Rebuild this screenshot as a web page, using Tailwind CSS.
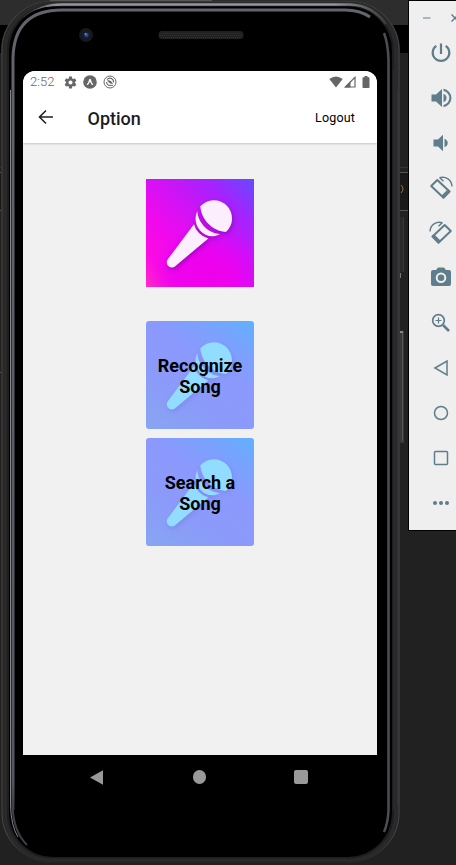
<!DOCTYPE html>
<html lang="en">
<head>
<meta charset="utf-8">
<title>Option</title>
<script src="https://cdn.jsdelivr.net/npm/@tailwindcss/browser@4"></script>
</head>
<body class="relative h-[865px] w-[456px] overflow-hidden bg-[#212121] font-[Roboto,sans-serif]">
<!-- editor behind the emulator, and the device frame -->
<svg class="absolute inset-0" width="456" height="865" viewBox="0 0 456 865" fill="none">
  <defs>
    <linearGradient id="fadeL" x1="0" y1="0" x2="0" y2="865" gradientUnits="userSpaceOnUse"><stop offset="0" stop-color="#62656e"/><stop offset=".9" stop-color="#555862"/><stop offset="1" stop-color="#111"/></linearGradient>
    <linearGradient id="topRim" x1="20" y1="0" x2="390" y2="0" gradientUnits="userSpaceOnUse"><stop offset="0" stop-color="#333"/><stop offset=".1" stop-color="#92959a"/><stop offset=".85" stop-color="#92959a"/><stop offset="1" stop-color="#333"/></linearGradient>
  </defs>
  <path d="M0 0H456V25H0Z" fill="#2d2d2d"/><path d="M50 0H212V1H50Z" fill="#555"/>
  <path d="M0 25H456V53H0Z" fill="#000"/>
  <path d="M0 167.500H409" stroke="#333"/><path d="M0 173H409V210H0Z" fill="#191919"/>
  <path d="M0 172.500H409M0 210.500H409" stroke="#555"/><path d="M0 372.500H3" stroke="#555"/>
  <path d="M401 185q4 4 0 8" stroke="#8b7840"/>
  <path d="M400 217H404V272H400Z" fill="#292929"/><path d="M403.500 218V272" stroke="#383838"/><path d="M400.500 273V278" stroke="#777"/>
  <path d="M400 331H404V443H400Z" fill="#393939"/><path d="M402.500 333V441" stroke="#555"/><path d="M400 331H403V333H400Z" fill="#888"/>
  <rect x="1" y="1" width="399" height="861" rx="50" fill="#1e1e1e"/>
  <rect x="2" y="1.500" width="397" height="860" rx="49" stroke="#454545" stroke-width="1.200"/>
  <rect x="5" y="3.500" width="391" height="857" rx="47" stroke="#292929" stroke-width="4"/>
  <path d="M24 18Q40 4.500 62 4.500H350Q372 5 386 24" stroke="url(#topRim)" stroke-width="2.500"/>
  <rect x="9" y="6.500" width="383" height="850.500" rx="44" fill="#000"/>
  <path d="M10.500 90V805Q11 826 18 837" stroke="#85878a"/>
  <path d="M13 810V58Q14 10 62 10H345Q360 10 370 17" stroke="url(#fadeL)" stroke-width="3"/>
  <path d="M12.500 805Q13 831 27 845" stroke="#3d4046" stroke-width="2"/>
  <path d="M384 33Q388 43 388.500 60V810Q388 823 384 832" stroke="#4d4e53" stroke-width="2.500"/>
  <path d="M394.500 70V810" stroke="#292929" stroke-width="3"/><path d="M398 90V805" stroke="#3b3b3b"/>
  <circle cx="86" cy="35" r="7" fill="#181819"/><circle cx="86" cy="35" r="4" fill="#141c3c"/><circle cx="86.500" cy="35" r="2" fill="#354b88"/><circle cx="85.500" cy="34" r="1" fill="#7289bc"/>
  <rect x="158.500" y="31" width="85" height="8" rx="3.500" fill="#202120"/><path d="M161 33.500H241M160 35.500H242M161 37.500H241" stroke="#303330" stroke-dasharray="1 1"/>
</svg>
<svg class="hidden">
  <symbol id="mic" viewBox="0 0 108 108">
    <path d="M54.300 27.300A18.200 18.200 0 1 1 80 53C71 53 56 45 54.300 27.300Z"/>
    <path d="M51.300 32.300C52 43 61 54 74 55C67 59 60 57.500 55 52.500C49.500 47 48 39 51.300 32.300Z"/>
    <path d="M48 45.300Q49 50 53 54Q57 58 62.300 59.500L29.800 86.700A4.400 4.400 0 0 1 22 80Z"/>
  </symbol>
</svg>

<main class="relative ml-[23px] flex w-[354px] flex-col pt-[71px]">
  <section class="h-[684px] overflow-hidden rounded-t-[12px] bg-[#f1f1f1]">
    <header class="h-[72px] bg-white shadow-[0_1px_2px_rgba(0,0,0,0.18)]">
      <div class="flex h-[22px] items-center pr-[7px] pl-[7px] text-[#666]">
        <span class="w-[34px] text-[13px] leading-[22px] font-light">2:52</span>
        <svg width="13" height="13" viewBox="1 1 22 22" fill="currentColor"><path d="M19.430 12.980c.04-.32.07-.64.07-.98s-.03-.66-.07-.98l2.110-1.650c.19-.15.24-.42.12-.64l-2-3.460c-.12-.22-.39-.3-.61-.22l-2.490 1a7.300 7.300 0 0 0-1.690-.98l-.38-2.650A.49.49 0 0 0 14 2h-4c-.25 0-.46.18-.49.42l-.38 2.650c-.61.25-1.170.59-1.690.98l-2.490-1c-.23-.09-.49 0-.61.22l-2 3.460c-.13.22-.07.49.12.64l2.110 1.650c-.04.32-.07.65-.07.98s.03.66.07.98l-2.110 1.650c-.19.15-.24.42-.12.64l2 3.460c.12.22.39.3.61.22l2.490-1c.52.4 1.080.73 1.690.98l.38 2.650c.03.24.24.42.49.42h4c.25 0 .46-.18.49-.42l.38-2.650c.61-.25 1.170-.59 1.690-.98l2.490 1c.23.09.49 0 .61-.22l2-3.460c.12-.22.07-.49-.12-.64zM12 15.500a3.500 3.500 0 1 1 0-7 3.500 3.500 0 0 1 0 7Z"/></svg>
        <svg class="ml-[6px]" width="14" height="14" viewBox="0 0 14 14"><circle cx="7" cy="7" r="6.800" fill="currentColor"/><path d="M3.700 9.700Q5.600 7.200 6.100 4.400Q7 3.300 7.900 4.400Q8.400 7.200 10.300 9.700Q9.300 10.700 8.300 8.900L7 6.700L5.700 8.900Q4.700 10.700 3.700 9.700Z" fill="#fff"/></svg>
        <svg class="ml-[6px]" width="14" height="14" viewBox="0 0 14 14" fill="none" stroke="currentColor"><circle cx="7" cy="7" r="6" stroke-width="1"/><path d="M4 4.500Q6 2.500 8.500 3.500Q11 5 10.500 7.500M3.500 7Q4 10.500 7 10.500L10 10.300" stroke-width="1.100"/><path d="M4.500 5.700Q8 5 9.500 8.500L7 8.300Z" fill="currentColor" stroke-width=".6"/></svg>
        <svg class="ml-auto" width="14" height="12" viewBox="0 0 14 12" fill="currentColor"><path d="M.3 3Q7-2 13.700 3L7 11.500Z"/></svg>
        <svg class="ml-[1px]" width="12" height="12" viewBox="0 0 12 12"><path d="M1.300 11L11 1.300V11Z" fill="none" stroke="currentColor" stroke-width="1.200"/><path d="M.5 11.500L6.500 5.500V11.500Z" fill="currentColor"/></svg>
        <svg class="ml-[6px]" width="8" height="12" viewBox="0 0 8 12" fill="currentColor"><path d="M2.500 0h3v1.300H7q.5 0 .5.700v9q0 1-.7 1H1.200Q.5 12 .5 11V2q0-.7.500-.7h1.500Z"/></svg>
      </div>
      <div class="flex h-[50px] items-center pr-[22px] pb-px pl-[15px] text-[#1c1c1e]">
        <svg class="mb-px" width="16" height="16" viewBox="0 0 16 16" fill="none" stroke="#222" stroke-width="1.600"><path d="M15 8H2M8 1.500L1.500 8L8 14.500"/></svg>
        <h1 class="ml-[33.500px] pt-[2px] text-[18px] font-medium">Option</h1>
        <span class="ml-auto pt-[2px] text-[12.500px] tracking-[.15px] text-black">Logout</span>
      </div>
    </header>
    <div class="flex flex-col items-center pt-[36px]">
      <div class="h-[108px] w-[108px] bg-[linear-gradient(45deg,#ff2cc4_0%,#fc0be2_15%,#f009ee_35%,#cc14f6_58%,#a423ff_78%,#654bff_100%)]">
        <svg class="h-full w-full" viewBox="0 0 108 108">
          <defs>
            <radialGradient id="glow"><stop offset="0" stop-color="#f000ea"/><stop offset=".45" stop-color="#ee00ef" stop-opacity=".8"/><stop offset="1" stop-color="#d900ff" stop-opacity="0"/></radialGradient>
          </defs>
          <ellipse cx="62" cy="100" rx="60" ry="55" fill="url(#glow)"/>
          <use href="#mic" width="108" height="108" fill="#76009e" opacity=".6" transform="translate(1 2)" class="blur-[2.500px]"/>
          <use href="#mic" width="108" height="108" fill="#fdeefe"/>
        </svg>
      </div>
      <button class="mt-[34px] grid h-[108px] w-[108px] place-items-center overflow-hidden rounded-[3px] bg-[linear-gradient(35deg,#86a6f1_0%,#8b9bf9_30%,#8b99fd_60%,#7aa2fd_80%,#60b1ff_100%)]">
        <svg class="col-start-1 row-start-1 h-full w-full" viewBox="0 0 108 108"><use href="#mic" width="108" height="108" fill="#7278e0" opacity=".5" transform="translate(1 2)" class="blur-[2.500px]"/><use href="#mic" width="108" height="108" fill="#91dcff"/></svg>
        <span class="relative col-start-1 row-start-1 pt-[2px] text-center text-[18px] leading-[21px] font-bold text-black">Recognize<br>Song</span>
      </button>
      <button class="mt-[9px] grid h-[108px] w-[108px] place-items-center overflow-hidden rounded-[3px] bg-[linear-gradient(35deg,#86a6f1_0%,#8b9bf9_30%,#8b99fd_60%,#7aa2fd_80%,#60b1ff_100%)]">
        <svg class="col-start-1 row-start-1 h-full w-full" viewBox="0 0 108 108"><use href="#mic" width="108" height="108" fill="#7278e0" opacity=".5" transform="translate(1 2)" class="blur-[2.500px]"/><use href="#mic" width="108" height="108" fill="#91dcff"/></svg>
        <span class="relative col-start-1 row-start-1 pt-[2px] text-center text-[18px] leading-[21px] font-bold text-black">Search a<br>Song</span>
      </button>
    </div>
  </section>
  <nav class="flex h-[44px] items-center justify-between pr-[69px] pl-[67px]">
    <svg width="14" height="15" viewBox="0 0 14 15" fill="#999"><path d="M0 7.500L13 .3V14.700Z"/></svg>
    <span class="ml-px h-[13.500px] w-[13.500px] rounded-full bg-[#999]"></span>
    <span class="h-[14px] w-[14px] rounded-[2px] bg-[#999]"></span>
  </nav>
</main>

<aside class="absolute top-0 left-[408px] h-[531px] w-[60px] border border-black bg-[#efefef] text-[#607d8b]">
  <div class="flex h-[34px] items-center gap-[20px] pl-[14px]">
    <svg width="8" height="8" viewBox="0 0 8 8" stroke="#8fa4ae" stroke-width="1.500"><path d="M0 4H7.500"/></svg>
    <svg width="8" height="8" viewBox="0 0 8 8" stroke="currentColor" stroke-width="1.500"><path d="M.5 .5L7.500 7.500M.5 7.500L7.500 .5"/></svg>
  </div>
  <div class="flex w-[64px] flex-col items-center pt-[6px] gap-[21px]">
    <svg width="24" height="24" viewBox="0 0 24 24" fill="none" stroke="currentColor" stroke-width="2.200"><path d="M12 2.500V13M7.300 4.800A8.300 8.300 0 1 0 16.700 4.800"/></svg>
    <svg width="24" height="24" viewBox="0 0 24 24" fill="currentColor"><path d="M2.500 8.500v7h4.500l6 5.500V3L7 8.500ZM14.500 7.800v8.400q3-1.200 3-4.200t-3-4.200ZM14.500 2.800v2.300a7 7 0 0 1 0 13.800v2.300a9.300 9.300 0 0 0 0-18.400Z"/></svg>
    <svg width="24" height="24" viewBox="0 0 24 24" fill="currentColor"><path d="M4.500 8.500v7H9l5 4.800V3.700L9 8.500ZM15.500 7.800v8.400q3.200-1.200 3.200-4.200t-3.200-4.200Z"/></svg>
    <svg width="24" height="24" viewBox="0 0 24 24" fill="none" stroke="currentColor"><path d="M8.300 4L20.500 15.500L14.500 21.800L2.200 10Z" stroke-width="2" stroke-linejoin="round"/><path d="M10.500 1.700C17 .2 22.500 3.500 23 10.500M10.500 1.500l4 3.800" stroke-width="1.400"/><path d="M13.300 21.300l7-7" stroke-width="3.500"/></svg>
    <svg width="24" height="24" viewBox="0 0 24 24" fill="none" stroke="currentColor"><path d="M15.700 4L3.500 15.500L9.500 21.800L21.800 10Z" stroke-width="2" stroke-linejoin="round"/><path d="M13.500 1.700C7 .2 1.500 3.500 1 10.500M13.500 1.500l-4 3.800" stroke-width="1.400"/><path d="M10.700 21.300l-7-7" stroke-width="3.500"/></svg>
    <svg width="24" height="24" viewBox="0 0 24 24" fill="currentColor" fill-rule="evenodd"><path d="M9 1.500L7 4H4Q2 4 2 6V18Q2 20 4 20H20Q22 20 22 18V6Q22 4 20 4H17L15 1.500ZM12 6.500a5.300 5.300 0 1 0 0 10.600a5.300 5.300 0 0 0 0-10.600Z"/><circle cx="12" cy="11.800" r="3.300"/></svg>
    <svg width="24" height="24" viewBox="0 0 24 24" fill="none" stroke="currentColor"><circle cx="9.500" cy="9.500" r="5.800" stroke-width="1.700"/><path d="M14 14L20 20" stroke-width="2.600"/><path d="M6.500 9.500h6M9.500 6.500v6" stroke-width="1.200"/></svg>
    <svg width="24" height="24" viewBox="0 0 24 24" fill="none" stroke="currentColor" stroke-width="1.500"><path d="M6 12L18 5V19Z"/></svg>
    <svg width="24" height="24" viewBox="0 0 24 24" fill="none" stroke="currentColor" stroke-width="1.500"><circle cx="12" cy="12" r="6.500"/></svg>
    <svg width="24" height="24" viewBox="0 0 24 24" fill="none" stroke="currentColor" stroke-width="1.500"><rect x="5.500" y="5.500" width="13" height="13" rx="1"/></svg>
    <svg width="24" height="24" viewBox="0 0 24 24" fill="currentColor"><circle cx="6" cy="12" r="2"/><circle cx="12" cy="12" r="2"/><circle cx="18" cy="12" r="2"/></svg>
  </div>
</aside>
</body>
</html>
